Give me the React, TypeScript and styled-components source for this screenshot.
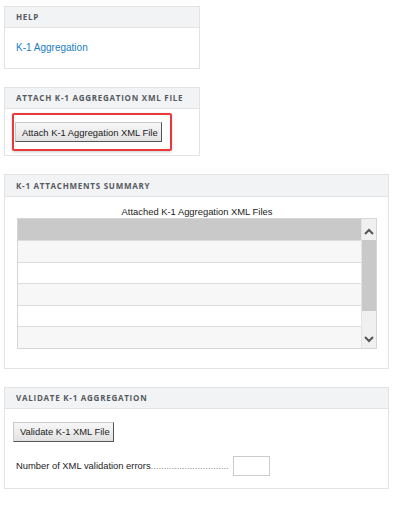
import React from 'react';
import styled, { createGlobalStyle } from 'styled-components';

const GlobalStyle = createGlobalStyle`
    body {
        margin:0;
        background:#fff;
        font-family:"Liberation Sans", Arial, sans-serif;
    }
`

const rows = [0, 1, 2, 3, 4];

function App() {
    return (
        <Page>
            <GlobalStyle />

            <Panel width={196}>
                <PanelHeader>Help</PanelHeader>
                <HelpBody>
                    <HelpLink href="#">K-1 Aggregation</HelpLink>
                </HelpBody>
            </Panel>

            <Panel width={196}>
                <PanelHeader>Attach K-1 Aggregation XML File</PanelHeader>
                <AttachBody>
                    <Highlight>
                        <FormButton>Attach K-1 Aggregation XML File</FormButton>
                    </Highlight>
                </AttachBody>
            </Panel>

            <Panel width={385}>
                <PanelHeader tall>K-1 Attachments Summary</PanelHeader>
                <SummaryBody>
                    <TableCaption>Attached K-1 Aggregation XML Files</TableCaption>
                    <TableFrame>
                        <TableRows>
                            <HeadRow />
                            {rows.map(i => (
                                <DataRow key={i} odd={i % 2 === 0} />
                            ))}
                        </TableRows>
                        <ScrollBar>
                            <ScrollArrow>
                                <svg width="10" height="7" viewBox="0 0 10 7">
                                    <path d="M1 6 L5 2 L9 6" fill="none" stroke="#555" strokeWidth="2" />
                                </svg>
                            </ScrollArrow>
                            <ScrollThumb />
                            <ScrollTrack />
                            <ScrollArrow>
                                <svg width="10" height="7" viewBox="0 0 10 7">
                                    <path d="M1 1 L5 5 L9 1" fill="none" stroke="#555" strokeWidth="2" />
                                </svg>
                            </ScrollArrow>
                        </ScrollBar>
                    </TableFrame>
                </SummaryBody>
            </Panel>

            <Panel width={385}>
                <PanelHeader>Validate K-1 Aggregation</PanelHeader>
                <ValidateBody>
                    <FormButton>Validate K-1 XML File</FormButton>
                    <ErrorLine>
                        <ErrorLabel>Number of XML validation errors</ErrorLabel>
                        <Dots>..............................</Dots>
                        <ErrorInput readOnly />
                    </ErrorLine>
                </ValidateBody>
            </Panel>
        </Page>
    )
}

export default App

const Page = styled.div`
    display:flex;
    flex-direction:column;
    gap:18px;
    padding:6px 0 20px 4px;
`

const Panel = styled.section<{ width: number }>`
    width:${props => props.width}px;
    box-sizing:border-box;
    border:1px solid #e3e3e3;
    background:#fff;
`

const PanelHeader = styled.h3<{ tall?: boolean }>`
    margin:0;
    height:${props => props.tall ? 21 : 20}px;
    line-height:${props => props.tall ? 21 : 20}px;
    padding:0 11px;
    background:#f2f3f5;
    border-bottom:1px solid #e3e3e3;
    font-family:"Open Sans", sans-serif;
    font-size:8px;
    font-weight:700;
    letter-spacing:0.75px;
    text-transform:uppercase;
    color:#555a60;
`

const HelpBody = styled.div`
    height:40px;
    padding:9px 11px 0;
    box-sizing:border-box;
`

const HelpLink = styled.a`
    font-size:10px;
    color:#1a7dc0;
    text-decoration:none;
`

const AttachBody = styled.div`
    height:46px;
    padding:4px 0 0 7px;
    box-sizing:border-box;
`

const Highlight = styled.div`
    display:inline-block;
    border:2px solid #e8393b;
    border-radius:2px;
    padding:7px 8px 7px 1px;
    box-shadow:0 1px 3px rgba(0,0,0,0.2);
`

const FormButton = styled.button`
    display:block;
    height:20px;
    padding:0 3px 0 6px;
    font-family:"Liberation Sans", Arial, sans-serif;
    font-size:9.4px;
    color:#222;
    background:linear-gradient(#f7f7f7, #e2e2e2);
    border:1px solid #c9c9c9;
    border-right-color:#555;
    border-bottom-color:#555;
    border-radius:0;
`

const SummaryBody = styled.div`
    padding:9px 11px 19px 12px;
`

const TableCaption = styled.div`
    text-align:center;
    font-size:9.4px;
    color:#222;
    line-height:11px;
    margin-bottom:1px;
`

const TableFrame = styled.div`
    display:flex;
    border:1px solid #d6d6d6;
`

const TableRows = styled.div`
    flex:1;
    display:flex;
    flex-direction:column;
`

const HeadRow = styled.div`
    height:21px;
    background:#c9c9c9;
`

const DataRow = styled.div<{ odd: boolean }>`
    height:20.5px;
    border-top:1px solid #dcdcdc;
    background:${props => props.odd ? "#f7f7f7" : "#fff"};
`

const ScrollBar = styled.div`
    width:14px;
    display:flex;
    flex-direction:column;
    background:#f0f0f0;
    border-left:1px solid #e4e4e4;
`

const ScrollArrow = styled.div`
    height:21px;
    display:flex;
    align-items:center;
    justify-content:center;
    padding-top:4px;
    box-sizing:border-box;
`

const ScrollThumb = styled.div`
    height:71px;
    background:#c9c9c9;
`

const ScrollTrack = styled.div`
    flex:1;
`

const ValidateBody = styled.div`
    padding:13px 11px 12px 8px;
`

const ErrorLine = styled.div`
    display:flex;
    align-items:center;
    margin-top:14px;
    padding-left:3px;
    font-size:9.4px;
    color:#222;
`

const ErrorLabel = styled.span`
    white-space:nowrap;
`

const Dots = styled.span`
    white-space:nowrap;
    color:#888;
    margin-right:4px;
`

const ErrorInput = styled.input`
    width:37px;
    height:20px;
    box-sizing:border-box;
    border:1px solid #ccc;
    padding:0;
`
